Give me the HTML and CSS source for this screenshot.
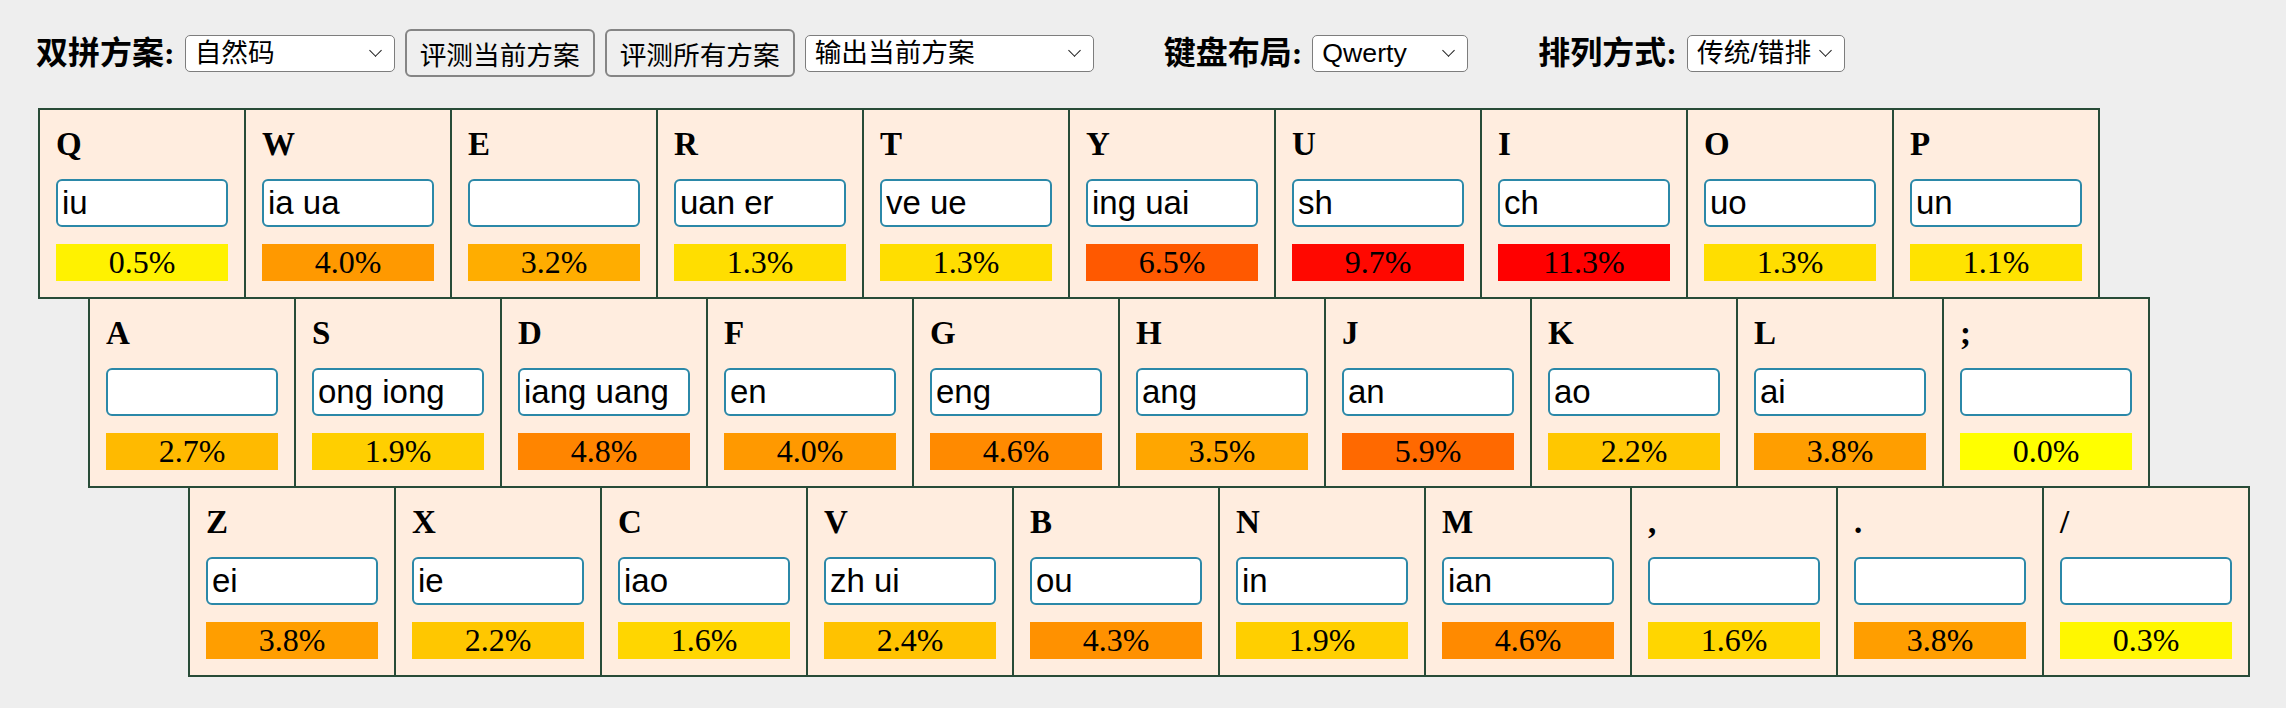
FILE: index.html
```html
<!DOCTYPE html>
<html lang="zh">
<head>
<meta charset="utf-8">
<title>双拼方案</title>
<link rel="stylesheet" href="styles.css">
</head>
<body>
<div class="page">
  <div class="toolbar">
    <label class="lbl">双拼方案:</label>
    <span class="sel-wrap w-scheme"><select class="sel"><option>自然码</option></select></span>
    <button class="btn">评测当前方案</button>
    <button class="btn">评测所有方案</button>
    <span class="sel-wrap w-export"><select class="sel"><option>输出当前方案</option></select></span>
    <label class="lbl lbl-gap">键盘布局:</label>
    <span class="sel-wrap w-layout"><select class="sel"><option>Qwerty</option></select></span>
    <label class="lbl lbl-gap">排列方式:</label>
    <span class="sel-wrap w-arr"><select class="sel"><option>传统/错排</option></select></span>
  </div>

  <div class="keyboard">
    <div class="row">
      <div class="key"><div class="cap">Q</div><input class="inp" value="iu"><div class="bar" style="background:rgb(255,242,0)">0.5%</div></div>
      <div class="key"><div class="cap">W</div><input class="inp" value="ia ua"><div class="bar" style="background:rgb(255,153,0)">4.0%</div></div>
      <div class="key"><div class="cap">E</div><input class="inp" value=""><div class="bar" style="background:rgb(255,173,0)">3.2%</div></div>
      <div class="key"><div class="cap">R</div><input class="inp" value="uan er"><div class="bar" style="background:rgb(255,222,0)">1.3%</div></div>
      <div class="key"><div class="cap">T</div><input class="inp" value="ve ue"><div class="bar" style="background:rgb(255,222,0)">1.3%</div></div>
      <div class="key"><div class="cap">Y</div><input class="inp" value="ing uai"><div class="bar" style="background:rgb(255,89,0)">6.5%</div></div>
      <div class="key"><div class="cap">U</div><input class="inp" value="sh"><div class="bar" style="background:rgb(255,8,0)">9.7%</div></div>
      <div class="key"><div class="cap">I</div><input class="inp" value="ch"><div class="bar" style="background:rgb(255,0,0)">11.3%</div></div>
      <div class="key"><div class="cap">O</div><input class="inp" value="uo"><div class="bar" style="background:rgb(255,222,0)">1.3%</div></div>
      <div class="key"><div class="cap">P</div><input class="inp" value="un"><div class="bar" style="background:rgb(255,227,0)">1.1%</div></div>
    </div>
    <div class="row row2">
      <div class="key"><div class="cap">A</div><input class="inp" value=""><div class="bar" style="background:rgb(255,186,0)">2.7%</div></div>
      <div class="key"><div class="cap">S</div><input class="inp" value="ong iong"><div class="bar" style="background:rgb(255,207,0)">1.9%</div></div>
      <div class="key"><div class="cap">D</div><input class="inp" value="iang uang"><div class="bar" style="background:rgb(255,133,0)">4.8%</div></div>
      <div class="key"><div class="cap">F</div><input class="inp" value="en"><div class="bar" style="background:rgb(255,153,0)">4.0%</div></div>
      <div class="key"><div class="cap">G</div><input class="inp" value="eng"><div class="bar" style="background:rgb(255,138,0)">4.6%</div></div>
      <div class="key"><div class="cap">H</div><input class="inp" value="ang"><div class="bar" style="background:rgb(255,166,0)">3.5%</div></div>
      <div class="key"><div class="cap">J</div><input class="inp" value="an"><div class="bar" style="background:rgb(255,105,0)">5.9%</div></div>
      <div class="key"><div class="cap">K</div><input class="inp" value="ao"><div class="bar" style="background:rgb(255,199,0)">2.2%</div></div>
      <div class="key"><div class="cap">L</div><input class="inp" value="ai"><div class="bar" style="background:rgb(255,158,0)">3.8%</div></div>
      <div class="key"><div class="cap">;</div><input class="inp" value=""><div class="bar" style="background:rgb(255,255,0)">0.0%</div></div>
    </div>
    <div class="row row3">
      <div class="key"><div class="cap">Z</div><input class="inp" value="ei"><div class="bar" style="background:rgb(255,158,0)">3.8%</div></div>
      <div class="key"><div class="cap">X</div><input class="inp" value="ie"><div class="bar" style="background:rgb(255,199,0)">2.2%</div></div>
      <div class="key"><div class="cap">C</div><input class="inp" value="iao"><div class="bar" style="background:rgb(255,214,0)">1.6%</div></div>
      <div class="key"><div class="cap">V</div><input class="inp" value="zh ui"><div class="bar" style="background:rgb(255,194,0)">2.4%</div></div>
      <div class="key"><div class="cap">B</div><input class="inp" value="ou"><div class="bar" style="background:rgb(255,145,0)">4.3%</div></div>
      <div class="key"><div class="cap">N</div><input class="inp" value="in"><div class="bar" style="background:rgb(255,207,0)">1.9%</div></div>
      <div class="key"><div class="cap">M</div><input class="inp" value="ian"><div class="bar" style="background:rgb(255,138,0)">4.6%</div></div>
      <div class="key"><div class="cap">,</div><input class="inp" value=""><div class="bar" style="background:rgb(255,214,0)">1.6%</div></div>
      <div class="key"><div class="cap">.</div><input class="inp" value=""><div class="bar" style="background:rgb(255,158,0)">3.8%</div></div>
      <div class="key"><div class="cap">/</div><input class="inp" value=""><div class="bar" style="background:rgb(255,247,0)">0.3%</div></div>
    </div>
  </div>
</div>
</body>
</html>
```

FILE: styles.css
```css
html, body {
  margin: 0;
  padding: 0;
  background: #eeeeee;
}

.page {
  padding: 29px 0 31px 0;
  font-family: "Liberation Serif", "Noto Sans CJK SC", serif;
  color: #000;
}

.toolbar {
  display: flex;
  align-items: center;
  height: 48px;
  padding-left: 36px;
  margin-bottom: 31px;
}

.lbl {
  font-family: "Liberation Serif", "Noto Sans CJK SC", serif;
  font-weight: bold;
  font-size: 32px;
  line-height: 37px;
  margin-right: 10px;
  white-space: nowrap;
}

.lbl-gap {
  margin-left: 60px;
}

.sel-wrap {
  position: relative;
  display: inline-block;
  height: 37px;
  margin-right: 10px;
}

.sel-wrap::after {
  content: "";
  position: absolute;
  right: 15px;
  top: 11px;
  width: 8px;
  height: 8px;
  border-right: 1.5px solid #1a1a1a;
  border-bottom: 1.5px solid #1a1a1a;
  transform: rotate(45deg);
  pointer-events: none;
}

.sel {
  appearance: none;
  -webkit-appearance: none;
  display: block;
  width: 100%;
  height: 37px;
  box-sizing: border-box;
  margin: 0;
  padding: 0 30px 0 9px;
  border: 1.5px solid #7d7d7d;
  border-radius: 5px;
  background: #fff;
  color: #000;
  font-family: "Liberation Sans", "Noto Sans CJK SC", sans-serif;
  font-size: 26.67px;
  line-height: 34px;
}

.w-scheme { width: 210px; }
.w-export { width: 289px; }
.w-layout { width: 156px; }
.w-arr { width: 158px; }

.btn {
  height: 48px;
  width: 190px;
  box-sizing: border-box;
  margin: 0 10px 0 0;
  padding: 0 12px;
  border: 2px solid #858585;
  border-radius: 6px;
  background: #efefef;
  color: #000;
  font-family: "Liberation Sans", "Noto Sans CJK SC", sans-serif;
  font-size: 26.67px;
}

.keyboard {
  padding-left: 38px;
}

.row {
  display: flex;
}

.row2 { margin: -2px 0 0 50px; }
.row3 { margin: -2px 0 0 150px; }

.key {
  width: 208px;
  height: 191px;
  box-sizing: border-box;
  flex: none;
  border: 2px solid #284b37;
  background: #ffeddf;
  margin-right: -2px;
  padding: 16px 16px 0 16px;
  display: flex;
  flex-direction: column;
}

.cap {
  font-family: "Liberation Serif", serif;
  font-weight: bold;
  font-size: 33px;
  line-height: 37px;
  height: 37px;
  margin-bottom: 16px;
}

.inp {
  display: block;
  width: 172px;
  height: 48px;
  box-sizing: border-box;
  margin: 0 0 17px 0;
  padding: 0 4px;
  border: 2px solid #2b88a8;
  border-radius: 6px;
  background: #fff;
  color: #000;
  font-family: "Liberation Sans", sans-serif;
  font-size: 33px;
  outline: none;
}

.bar {
  width: 172px;
  height: 37px;
  line-height: 37px;
  text-align: center;
  font-family: "Liberation Serif", serif;
  font-size: 32px;
}
```
